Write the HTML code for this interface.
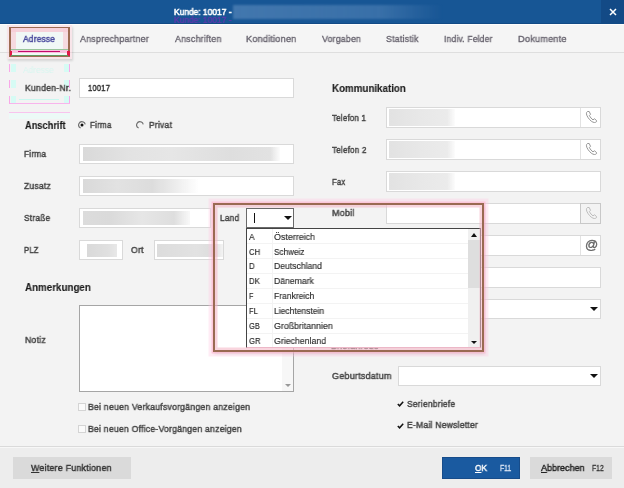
<!DOCTYPE html>
<html><head><meta charset="utf-8">
<style>
*{box-sizing:border-box;margin:0;padding:0}
html,body{width:624px;height:488px;overflow:hidden;background:#f3f3f3;font-family:"Liberation Sans",sans-serif;position:relative}
.a{position:absolute}
.t{position:absolute;white-space:nowrap;height:30px;line-height:30px;transform-origin:0 0;will-change:transform;filter:blur(0.3px)}
.in{position:absolute;background:#fff;border:1px solid #d9d9d9}
.blur{position:absolute;filter:blur(0.7px)}
.btnico{position:absolute;border-left:1px solid #e2e2e2;top:0;bottom:0;right:0;width:20px}
.sep{position:absolute;left:247px;width:221px;height:1px;background:#f3f3f3}
.arrow{position:absolute;width:0;height:0;border-left:4px solid transparent;border-right:4px solid transparent;border-top:4px solid #111}
</style></head><body>
<!-- title bar -->
<div class="a" style="left:0;top:0;width:624px;height:23.5px;background:#175695;overflow:hidden;border-bottom:1.2px solid #124a85">
<div class="a" style="left:601px;top:0;width:23px;height:23px;background:#134a86"></div>
<div class="a" style="left:233px;top:5px;width:210px;height:14px;background:linear-gradient(90deg,rgba(120,160,205,0.45),rgba(120,160,205,0.35) 70%,rgba(120,160,205,0));filter:blur(1px)"></div>
<div class="t" style="left:173.70px;top:4.90px;font-size:8.6px;color:rgba(95,55,170,0.85);font-weight:400;-webkit-text-stroke:0.5px rgba(95,55,170,0.85);transform:scaleX(0.9780);">Kunde: 10017 -</div>
</div>
<svg class="a" style="left:608.5px;top:7.5px" width="8" height="8" viewBox="0 0 8 8"><path d="M1 1L7 7M7 1L1 7" stroke="#fff" stroke-width="1.5"/></svg>
<!-- tab bar -->
<div class="a" style="left:0;top:23.5px;width:624px;height:29.5px;background:#f5f5f5;border-top:1.2px solid #fdfdfd;border-bottom:1px solid #dedede"></div>
<div class="a" style="left:7px;top:25px;width:65px;height:34px;background:rgba(255,200,215,0.35);box-shadow:1px 2px 2px rgba(0,0,0,0.12)"></div>
<div class="a" style="left:8.6px;top:26.5px;width:61.6px;height:30.8px;background:#f1f8f6;border:2px solid #9c6b52;border-top-width:1.6px"></div>
<div class="a" style="left:10.6px;top:28.1px;width:57.6px;height:3.5px;background:rgba(248,200,212,0.8)"></div>
<div class="a" style="left:10.6px;top:28px;width:5px;height:21px;background:rgba(248,205,215,0.7)"></div>
<div class="a" style="left:63.4px;top:28px;width:5px;height:21px;background:rgba(248,205,215,0.7)"></div>
<div class="a" style="left:10.6px;top:48.8px;width:57.8px;height:1px;background:#98c49a"></div>
<div class="a" style="left:10.6px;top:50.2px;width:57.8px;height:3px;background:#f8c0dc"></div>
<div class="a" style="left:18px;top:51.1px;width:41.5px;height:1.3px;background:#c2086a"></div>
<div class="a" style="left:9.5px;top:50.5px;width:2.5px;height:5px;background:#e01848"></div>
<div class="a" style="left:67px;top:50.5px;width:2.5px;height:5px;background:#e01848"></div>
<div class="a" style="left:10.6px;top:54.5px;width:57.8px;height:1px;background:#5f9a60"></div>

<!-- ghost artifacts -->
<div class="a" style="left:9px;top:64px;width:1.2px;height:7.5px;background:#f8a8e8"></div>
<div class="a" style="left:9px;top:80px;width:1.2px;height:7.5px;background:#f8a8e8"></div>
<div class="a" style="left:9px;top:96px;width:1.2px;height:7.5px;background:#f8a8e8"></div>
<div class="a" style="left:68.8px;top:64px;width:1.2px;height:7.5px;background:#f8a8e8"></div>
<div class="a" style="left:68.8px;top:80px;width:1.2px;height:7.5px;background:#f8a8e8"></div>
<div class="a" style="left:68.8px;top:96px;width:1.2px;height:7.5px;background:#f8a8e8"></div>
<div class="a" style="left:11px;top:64px;width:4.5px;height:7.5px;background:#d6fbf4"></div>
<div class="a" style="left:11px;top:80px;width:4.5px;height:7.5px;background:#d6fbf4"></div>
<div class="a" style="left:11px;top:96px;width:4.5px;height:7.5px;background:#d6fbf4"></div>
<div class="a" style="left:64px;top:64px;width:4.5px;height:7.5px;background:#d6fbf4"></div>
<div class="a" style="left:64px;top:80px;width:4.5px;height:7.5px;background:#d6fbf4"></div>
<div class="a" style="left:64px;top:96px;width:4.5px;height:7.5px;background:#d6fbf4"></div>
<div class="a" style="left:18.5px;top:98.8px;width:40.5px;height:1px;background:#c8f8f0"></div>
<div class="a" style="left:9.5px;top:102.8px;width:60px;height:1px;background:#f8b4ec"></div>
<div class="a" style="left:9px;top:112.8px;width:61px;height:6px;background:#ecfaf7"></div>
<div class="a" style="left:9px;top:111.8px;width:61px;height:1px;background:#f8c4ee"></div>
<div class="t" style="left:23px;top:55px;font-size:9px;color:#d8f6f0;transform:scaleX(0.93)">Adresse</div>
<!-- left column -->
<div class="in" style="left:79px;top:78px;width:215px;height:20px"></div>
<svg class="a" style="left:76.5px;top:119.7px" width="10" height="10" viewBox="0 0 10 10"><circle cx="5" cy="5" r="3.3" fill="none" stroke="#6a6a6a" stroke-width="1.1" stroke-dasharray="13 7.7" transform="rotate(115 5 5)"/><circle cx="5" cy="5" r="1.5" fill="#111"/></svg>
<svg class="a" style="left:135.2px;top:119.7px" width="10" height="10" viewBox="0 0 10 10"><circle cx="5" cy="5" r="3.3" fill="none" stroke="#6a6a6a" stroke-width="1.1" stroke-dasharray="13 7.7" transform="rotate(115 5 5)"/></svg>

<div class="in" style="left:79px;top:144px;width:215px;height:20px"></div>
<div class="blur" style="left:82.5px;top:146.5px;width:197px;height:14.5px;background:linear-gradient(90deg,#d9d9d9,#e3e3e3 25%,#e6e6e6 45%,#dedede 75%,#e2e2e2 95%,rgba(245,245,245,0.3))"></div>

<div class="in" style="left:79px;top:176px;width:215px;height:20px"></div>
<div class="blur" style="left:82.5px;top:178.5px;width:116px;height:14.5px;background:linear-gradient(90deg,#d9d9d9,#e2e2e2 30%,#dcdcdc 60%,rgba(232,232,232,0.7) 82%,rgba(255,255,255,0))"></div>

<div class="in" style="left:79px;top:208px;width:131.5px;height:20px"></div>
<div class="blur" style="left:82.5px;top:210.5px;width:107px;height:14.5px;background:linear-gradient(90deg,#dcdcdc,#dadada 25%,#e6e6e6 55%,#dedede 85%,rgba(240,240,240,0.4))"></div>

<div class="in" style="left:79px;top:240px;width:44px;height:20px"></div>
<div class="blur" style="left:86.5px;top:243.5px;width:30px;height:13.5px;background:linear-gradient(90deg,#d9d9d9,#e0e0e0 70%,#e8e8e8)"></div>
<div class="in" style="left:153.5px;top:240px;width:70px;height:20px"></div>
<div class="blur" style="left:156.5px;top:243.5px;width:66px;height:13.5px;background:linear-gradient(90deg,#dcdcdc,#e2e2e2 60%,#dddddd 85%,rgba(235,235,235,0.6))"></div>

<div class="a" style="left:79px;top:305px;width:215px;height:87px;background:#fff;border:1px solid #a5a5a5"></div>
<div class="a" style="left:282px;top:306px;width:11px;height:85px;background:#f7f7f7"></div>
<div class="arrow" style="left:285px;top:384px;border-left-width:3px;border-right-width:3px;border-top:3px solid #999"></div>

<div class="a" style="left:78px;top:402.5px;width:8px;height:8px;border:1px solid #d4d4d4;background:#fafafa"></div>
<div class="a" style="left:78px;top:425px;width:8px;height:8px;border:1px solid #d4d4d4;background:#fafafa"></div>

<!-- right column -->
<div class="in" style="left:386px;top:107px;width:215px;height:20.5px"><div class="btnico"></div></div>
<div class="blur" style="left:388.5px;top:109px;width:66px;height:16.5px;background:linear-gradient(90deg,#e2e2e2,#e8e8e8 50%,#ebebeb 88%,rgba(245,245,245,0.3))"></div>
<div class="in" style="left:386px;top:139px;width:215px;height:20.5px"><div class="btnico"></div></div>
<div class="blur" style="left:388.5px;top:141px;width:66px;height:16.5px;background:linear-gradient(90deg,#e2e2e2,#e8e8e8 50%,#ebebeb 88%,rgba(245,245,245,0.3))"></div>
<div class="in" style="left:386px;top:171px;width:215px;height:20.5px"></div>
<div class="blur" style="left:388.5px;top:173px;width:66px;height:16.5px;background:linear-gradient(90deg,#e2e2e2,#e8e8e8 50%,#ebebeb 88%,rgba(245,245,245,0.3))"></div>
<div class="in" style="left:386px;top:203px;width:215px;height:20.5px"><div class="btnico" style="background:#f3f3f3;border:1px solid #c8c8c8;top:-1px;bottom:-1px;right:-1px;width:21px"></div></div>
<div class="in" style="left:386px;top:235px;width:215px;height:20.5px"><div class="btnico"></div></div>
<div class="in" style="left:386px;top:267px;width:215px;height:20.5px"></div>
<div class="in" style="left:386px;top:299px;width:215px;height:20px"></div>
<div class="arrow" style="left:590px;top:307px"></div>

<div class="in" style="left:398px;top:366px;width:203px;height:19.5px"></div>
<div class="arrow" style="left:590px;top:374px"></div>
<svg class="a" style="left:397px;top:401px" width="7" height="6" viewBox="0 0 7 6"><path d="M0.8 3L2.6 4.8L6.2 0.8" stroke="#111" stroke-width="1.5" fill="none"/></svg>
<svg class="a" style="left:397px;top:422.5px" width="7" height="6" viewBox="0 0 7 6"><path d="M0.8 3L2.6 4.8L6.2 0.8" stroke="#111" stroke-width="1.5" fill="none"/></svg>

<!-- phone icons -->
<svg class="a" style="left:585px;top:110px" width="13" height="14" viewBox="0 0 13 14"><path d="M2.5 1.5C1 2.5 1 4.5 3 7.5C5 10.5 7.5 12.5 9.5 12.5C11 12.5 12 11.5 11.5 10.5L9.5 8.8L8 9.8C6.8 9.2 5 7 4.4 5.5L5.5 4.3L4.2 1.5Z" stroke="#8a8a8a" stroke-width="0.9" fill="none"/></svg>
<svg class="a" style="left:585px;top:142px" width="13" height="14" viewBox="0 0 13 14"><path d="M2.5 1.5C1 2.5 1 4.5 3 7.5C5 10.5 7.5 12.5 9.5 12.5C11 12.5 12 11.5 11.5 10.5L9.5 8.8L8 9.8C6.8 9.2 5 7 4.4 5.5L5.5 4.3L4.2 1.5Z" stroke="#8a8a8a" stroke-width="0.9" fill="none"/></svg>
<svg class="a" style="left:585px;top:206px" width="13" height="14" viewBox="0 0 13 14"><path d="M2.5 1.5C1 2.5 1 4.5 3 7.5C5 10.5 7.5 12.5 9.5 12.5C11 12.5 12 11.5 11.5 10.5L9.5 8.8L8 9.8C6.8 9.2 5 7 4.4 5.5L5.5 4.3L4.2 1.5Z" stroke="#b5b5b5" stroke-width="0.9" fill="none"/></svg>
<div class="a" style="left:584.5px;top:237px;width:14px;height:16px;line-height:16px;font-size:13px;color:#666;-webkit-text-stroke:0.35px #666;will-change:transform">@</div>

<div class="t" style="left:173.70px;top:-3.15px;font-size:8.6px;color:#fff;font-weight:400;-webkit-text-stroke:0.55px #fff;transform:scaleX(0.9780);">Kunde: 10017 -</div>
<div class="t" style="left:22.90px;top:24.00px;font-size:9.2px;color:#4a4a9e;font-weight:400;-webkit-text-stroke:0.45px #4a4a9e;letter-spacing:0.2px;transform:scaleX(0.9143);">Adresse</div>
<div class="t" style="left:80.00px;top:24.30px;font-size:9.4px;color:#67636e;font-weight:400;-webkit-text-stroke:0.35px #67636e;letter-spacing:0.2px;transform:scaleX(0.9534);">Ansprechpartner</div>
<div class="t" style="left:174.60px;top:24.30px;font-size:9.4px;color:#67636e;font-weight:400;-webkit-text-stroke:0.35px #67636e;letter-spacing:0.2px;transform:scaleX(0.9469);">Anschriften</div>
<div class="t" style="left:246.00px;top:24.30px;font-size:9.4px;color:#67636e;font-weight:400;-webkit-text-stroke:0.35px #67636e;letter-spacing:0.2px;transform:scaleX(0.9750);">Konditionen</div>
<div class="t" style="left:321.70px;top:24.30px;font-size:9.4px;color:#67636e;font-weight:400;-webkit-text-stroke:0.35px #67636e;letter-spacing:0.2px;transform:scaleX(0.9357);">Vorgaben</div>
<div class="t" style="left:386.00px;top:24.30px;font-size:9.4px;color:#67636e;font-weight:400;-webkit-text-stroke:0.35px #67636e;letter-spacing:0.2px;transform:scaleX(0.9429);">Statistik</div>
<div class="t" style="left:444.00px;top:24.30px;font-size:9.4px;color:#67636e;font-weight:400;-webkit-text-stroke:0.35px #67636e;letter-spacing:0.2px;transform:scaleX(0.9074);">Indiv. Felder</div>
<div class="t" style="left:518.00px;top:24.30px;font-size:9.4px;color:#67636e;font-weight:400;-webkit-text-stroke:0.35px #67636e;letter-spacing:0.2px;transform:scaleX(0.9800);">Dokumente</div>
<div class="t" style="left:24.90px;top:72.80px;font-size:9.5px;color:#444;font-weight:400;-webkit-text-stroke:0.45px #444;letter-spacing:0.25px;transform:scaleX(0.9120);">Kunden-Nr.</div>
<div class="t" style="left:88.00px;top:72.80px;font-size:9.5px;color:#333;font-weight:400;-webkit-text-stroke:0.45px #333;letter-spacing:0.25px;transform:scaleX(0.8000);">10017</div>
<div class="t" style="left:25.00px;top:109.60px;font-size:10.6px;color:#1a1a1a;font-weight:700;-webkit-text-stroke:0.1px #1a1a1a;transform:scaleX(0.8723);">Anschrift</div>
<div class="t" style="left:90.00px;top:110.00px;font-size:9.5px;color:#444;font-weight:400;-webkit-text-stroke:0.45px #444;letter-spacing:0.25px;transform:scaleX(0.8462);">Firma</div>
<div class="t" style="left:149.00px;top:110.10px;font-size:9.5px;color:#444;font-weight:400;-webkit-text-stroke:0.45px #444;letter-spacing:0.25px;transform:scaleX(0.8962);">Privat</div>
<div class="t" style="left:24.40px;top:139.00px;font-size:9.5px;color:#444;font-weight:400;-webkit-text-stroke:0.45px #444;letter-spacing:0.25px;transform:scaleX(0.8692);">Firma</div>
<div class="t" style="left:24.40px;top:171.00px;font-size:9.5px;color:#444;font-weight:400;-webkit-text-stroke:0.45px #444;letter-spacing:0.25px;transform:scaleX(0.9000);">Zusatz</div>
<div class="t" style="left:24.40px;top:203.00px;font-size:9.5px;color:#444;font-weight:400;-webkit-text-stroke:0.45px #444;letter-spacing:0.25px;transform:scaleX(0.8767);">Straße</div>
<div class="t" style="left:24.40px;top:235.00px;font-size:9.5px;color:#444;font-weight:400;-webkit-text-stroke:0.45px #444;letter-spacing:0.25px;transform:scaleX(0.8056);">PLZ</div>
<div class="t" style="left:130.80px;top:234.90px;font-size:9.5px;color:#444;font-weight:400;-webkit-text-stroke:0.45px #444;letter-spacing:0.25px;transform:scaleX(0.9143);">Ort</div>
<div class="t" style="left:219.60px;top:202.70px;font-size:9.5px;color:#444;font-weight:400;-webkit-text-stroke:0.45px #444;letter-spacing:0.25px;transform:scaleX(0.8773);">Land</div>
<div class="t" style="left:24.90px;top:271.70px;font-size:10.6px;color:#1a1a1a;font-weight:700;-webkit-text-stroke:0.1px #1a1a1a;transform:scaleX(0.9239);">Anmerkungen</div>
<div class="t" style="left:25.00px;top:324.60px;font-size:9.5px;color:#444;font-weight:400;-webkit-text-stroke:0.45px #444;letter-spacing:0.25px;transform:scaleX(0.9130);">Notiz</div>
<div class="t" style="left:88.20px;top:392.00px;font-size:9.5px;color:#444;font-weight:400;-webkit-text-stroke:0.45px #444;letter-spacing:0.25px;transform:scaleX(0.9141);">Bei neuen Verkaufsvorgängen anzeigen</div>
<div class="t" style="left:88.20px;top:414.00px;font-size:9.5px;color:#444;font-weight:400;-webkit-text-stroke:0.45px #444;letter-spacing:0.25px;transform:scaleX(0.9101);">Bei neuen Office-Vorgängen anzeigen</div>
<div class="t" style="left:331.50px;top:73.00px;font-size:10.6px;color:#1a1a1a;font-weight:700;-webkit-text-stroke:0.1px #1a1a1a;transform:scaleX(0.9225);">Kommunikation</div>
<div class="t" style="left:332.00px;top:102.70px;font-size:9.5px;color:#444;font-weight:400;-webkit-text-stroke:0.45px #444;letter-spacing:0.25px;transform:scaleX(0.8366);">Telefon 1</div>
<div class="t" style="left:332.00px;top:134.70px;font-size:9.5px;color:#444;font-weight:400;-webkit-text-stroke:0.45px #444;letter-spacing:0.25px;transform:scaleX(0.8488);">Telefon 2</div>
<div class="t" style="left:331.60px;top:166.60px;font-size:9.5px;color:#444;font-weight:400;-webkit-text-stroke:0.45px #444;letter-spacing:0.25px;transform:scaleX(0.8118);">Fax</div>
<div class="t" style="left:331.60px;top:198.40px;font-size:9.5px;color:#444;font-weight:400;-webkit-text-stroke:0.45px #444;letter-spacing:0.25px;transform:scaleX(0.9417);">Mobil</div>
<div class="t" style="left:331.50px;top:360.60px;font-size:9.5px;color:#444;font-weight:400;-webkit-text-stroke:0.45px #444;letter-spacing:0.25px;transform:scaleX(0.9444);">Geburtsdatum</div>
<div class="t" style="left:406.80px;top:388.80px;font-size:9.5px;color:#444;font-weight:400;-webkit-text-stroke:0.45px #444;letter-spacing:0.25px;transform:scaleX(0.8907);">Serienbriefe</div>
<div class="t" style="left:406.80px;top:410.40px;font-size:9.5px;color:#444;font-weight:400;-webkit-text-stroke:0.45px #444;letter-spacing:0.25px;transform:scaleX(0.9025);">E-Mail Newsletter</div>
<div class="t" style="left:331.00px;top:330.50px;font-size:9.5px;color:#444;font-weight:400;-webkit-text-stroke:0.45px #444;letter-spacing:0.25px;transform:scaleX(0.9231);">Briefanrede</div>

<!-- combo + dropdown -->
<div class="a" style="left:246px;top:208px;width:48px;height:20px;background:#fff;border:1px solid #6a6a6a"></div>
<div class="a" style="left:254px;top:213px;width:1.2px;height:10px;background:#111"></div>
<div class="arrow" style="left:284px;top:216px"></div>

<div class="a" style="left:246px;top:228px;width:235px;height:120px;background:#fff;border:1px solid #444;border-bottom-color:#e8b8c8"></div>
<div class="sep" style="top:243px"></div>
<div class="sep" style="top:258px"></div>
<div class="sep" style="top:273px"></div>
<div class="sep" style="top:288px"></div>
<div class="sep" style="top:303px"></div>
<div class="sep" style="top:318px"></div>
<div class="sep" style="top:333px"></div>
<div class="a" style="left:271.5px;top:229px;width:1px;height:118px;background:#f3f3f3"></div>
<div class="a" style="left:468px;top:229px;width:12px;height:118px;background:#f0f0f0"></div>
<div class="a" style="left:468px;top:240px;width:12px;height:48px;background:#dedede"></div>
<div class="arrow" style="left:471px;top:232.5px;border-top:0;border-bottom:4px solid #111;border-left-width:3px;border-right-width:3px"></div>
<div class="arrow" style="left:471px;top:340.5px;border-left-width:3px;border-right-width:3px;border-top-width:3px"></div>
<div class="t" style="left:249.00px;top:222.00px;font-size:9.0px;color:#2a2a2a;font-weight:400;-webkit-text-stroke:0.15px #2a2a2a;transform:scaleX(0.9333);">A</div>
<div class="t" style="left:274.00px;top:222.00px;font-size:9.0px;color:#2a2a2a;font-weight:400;-webkit-text-stroke:0.15px #2a2a2a;transform:scaleX(0.9878);">Österreich</div>
<div class="t" style="left:249.00px;top:236.80px;font-size:9.0px;color:#2a2a2a;font-weight:400;-webkit-text-stroke:0.15px #2a2a2a;transform:scaleX(0.8615);">CH</div>
<div class="t" style="left:274.00px;top:236.80px;font-size:9.0px;color:#2a2a2a;font-weight:400;-webkit-text-stroke:0.15px #2a2a2a;transform:scaleX(0.9091);">Schweiz</div>
<div class="t" style="left:249.00px;top:251.20px;font-size:9.0px;color:#2a2a2a;font-weight:400;-webkit-text-stroke:0.15px #2a2a2a;transform:scaleX(0.8857);">D</div>
<div class="t" style="left:274.00px;top:251.20px;font-size:9.0px;color:#2a2a2a;font-weight:400;-webkit-text-stroke:0.15px #2a2a2a;transform:scaleX(0.9580);">Deutschland</div>
<div class="t" style="left:249.00px;top:266.20px;font-size:9.0px;color:#2a2a2a;font-weight:400;-webkit-text-stroke:0.15px #2a2a2a;transform:scaleX(0.8692);">DK</div>
<div class="t" style="left:274.00px;top:266.20px;font-size:9.0px;color:#2a2a2a;font-weight:400;-webkit-text-stroke:0.15px #2a2a2a;transform:scaleX(0.9595);">Dänemark</div>
<div class="t" style="left:249.00px;top:281.20px;font-size:9.0px;color:#2a2a2a;font-weight:400;-webkit-text-stroke:0.15px #2a2a2a;transform:scaleX(0.8000);">F</div>
<div class="t" style="left:274.00px;top:281.20px;font-size:9.0px;color:#2a2a2a;font-weight:400;-webkit-text-stroke:0.15px #2a2a2a;transform:scaleX(0.9476);">Frankreich</div>
<div class="t" style="left:249.00px;top:296.20px;font-size:9.0px;color:#2a2a2a;font-weight:400;-webkit-text-stroke:0.15px #2a2a2a;transform:scaleX(0.8364);">FL</div>
<div class="t" style="left:274.00px;top:296.20px;font-size:9.0px;color:#2a2a2a;font-weight:400;-webkit-text-stroke:0.15px #2a2a2a;transform:scaleX(0.9453);">Liechtenstein</div>
<div class="t" style="left:249.00px;top:311.20px;font-size:9.0px;color:#2a2a2a;font-weight:400;-webkit-text-stroke:0.15px #2a2a2a;transform:scaleX(0.8308);">GB</div>
<div class="t" style="left:274.00px;top:311.20px;font-size:9.0px;color:#2a2a2a;font-weight:400;-webkit-text-stroke:0.15px #2a2a2a;transform:scaleX(0.9783);">Großbritannien</div>
<div class="t" style="left:249.00px;top:326.00px;font-size:9.0px;color:#2a2a2a;font-weight:400;-webkit-text-stroke:0.15px #2a2a2a;transform:scaleX(0.8615);">GR</div>
<div class="t" style="left:274.00px;top:326.00px;font-size:9.0px;color:#2a2a2a;font-weight:400;-webkit-text-stroke:0.15px #2a2a2a;transform:scaleX(0.9736);">Griechenland</div>
<div class="a" style="left:212.5px;top:203px;width:271px;height:149px;border:2.4px solid #9a6a52;box-shadow:0 0 0 1.5px rgba(255,175,200,0.55),0 0 0 4.5px rgba(255,200,225,0.35),inset 0 0 0 2.5px rgba(245,185,200,0.6),1px 2px 3px rgba(0,0,0,0.15)"></div>

<!-- footer -->
<div class="a" style="left:0;top:446px;width:624px;height:42px;background:#ededed;border-top:1px solid #dadada"></div>
<div class="a" style="left:0;top:447px;width:624px;height:1px;background:#f7f7f7"></div>
<div class="a" style="left:13px;top:456.5px;width:118px;height:22px;background:#dadada"></div>
<div class="a" style="left:442px;top:456.5px;width:78px;height:22px;background:#1a5aa0;border:1px solid #174c8a"></div>
<div class="a" style="left:530px;top:456.5px;width:82px;height:22px;background:#dadada"></div>
<div class="t" style="left:30.80px;top:453.00px;font-size:9.5px;color:#333;font-weight:400;-webkit-text-stroke:0.45px #333;letter-spacing:0.25px;transform:scaleX(0.9310);"><u>W</u>eitere Funktionen</div>
<div class="t" style="left:474.50px;top:452.80px;font-size:9.4px;color:#fff;font-weight:400;-webkit-text-stroke:0.4px #fff;transform:scaleX(0.8929);"><u>O</u>K</div>
<div class="t" style="left:499.60px;top:453.00px;font-size:8.8px;color:#dce6f5;font-weight:400;-webkit-text-stroke:0.3px #dce6f5;transform:scaleX(0.7733);">F11</div>
<div class="t" style="left:540.80px;top:452.80px;font-size:9.4px;color:#222;font-weight:400;-webkit-text-stroke:0.4px #222;transform:scaleX(0.9587);"><u>A</u>bbrechen</div>
<div class="t" style="left:592.20px;top:453.00px;font-size:8.8px;color:#333;font-weight:400;-webkit-text-stroke:0.3px #333;transform:scaleX(0.7733);">F12</div>
</body></html>
